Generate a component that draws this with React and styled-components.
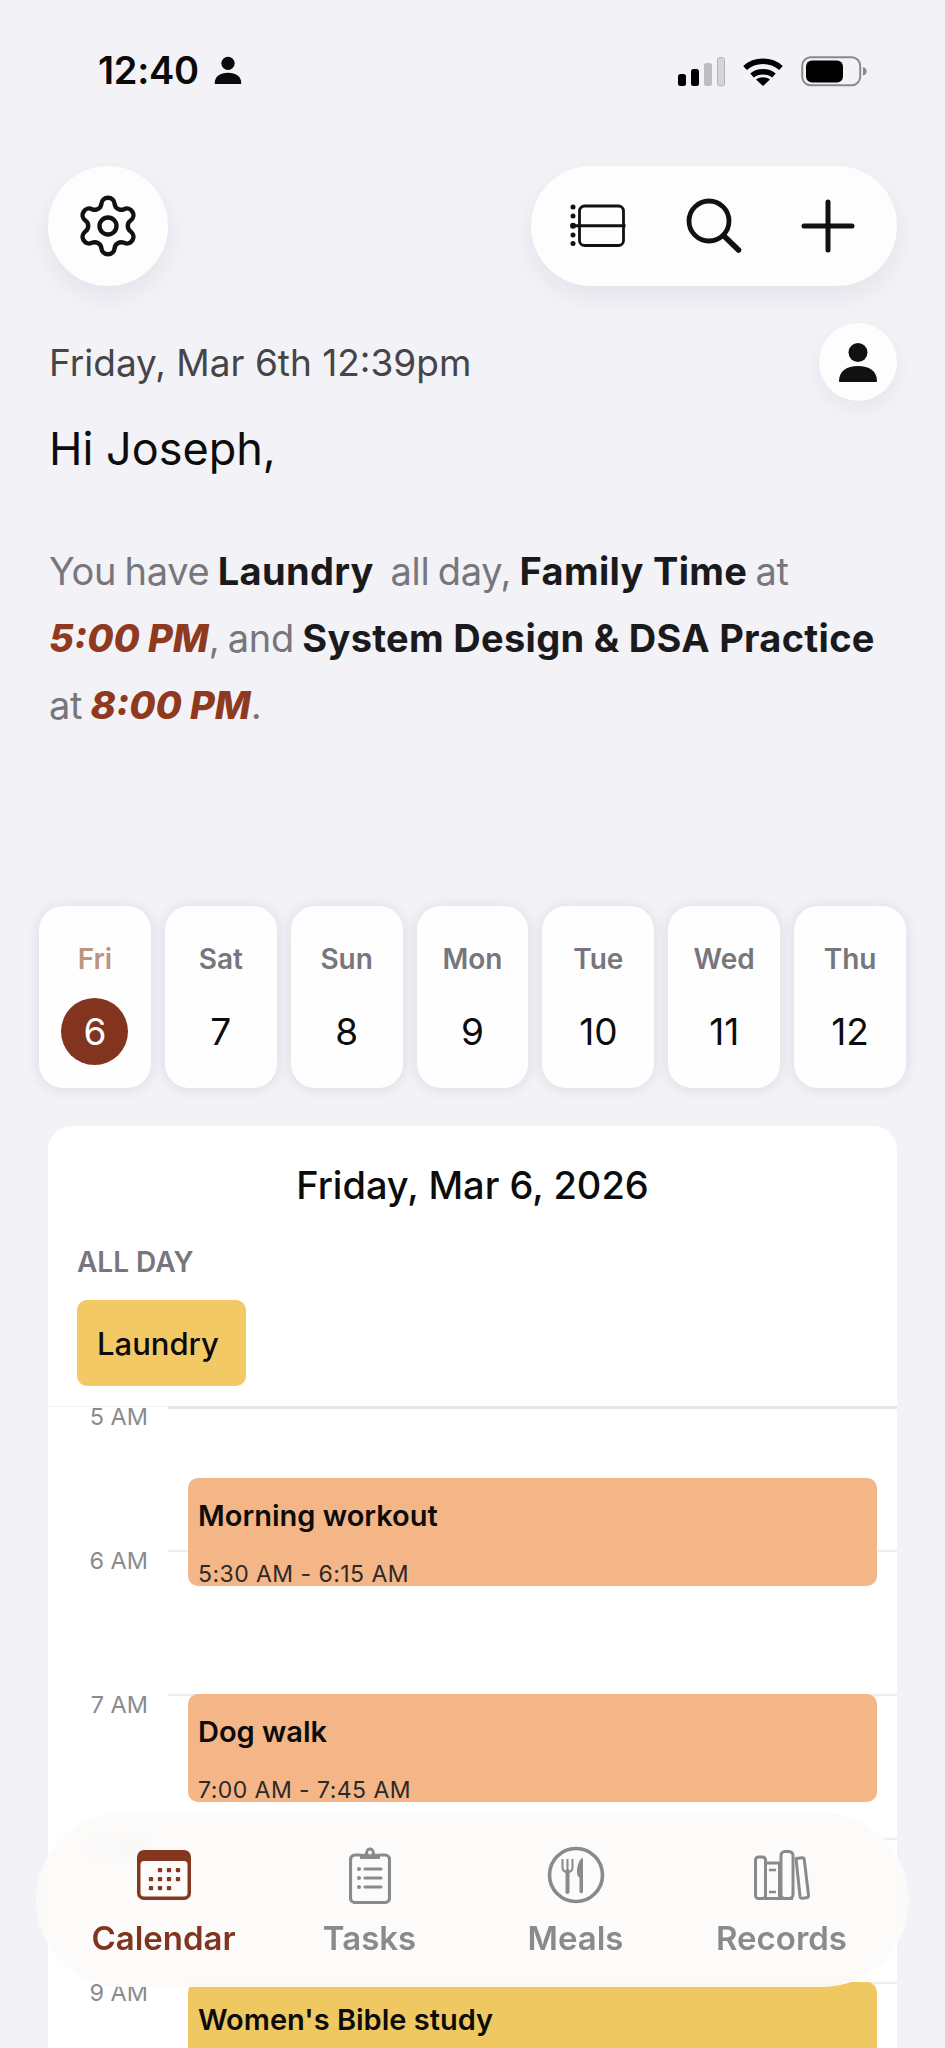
import React from 'react'
import styled, { createGlobalStyle } from 'styled-components'
import { Settings } from 'lucide-react'

const days = [
  { name: 'Fri', num: 6, active: true },
  { name: 'Sat', num: 7 },
  { name: 'Sun', num: 8 },
  { name: 'Mon', num: 9 },
  { name: 'Tue', num: 10 },
  { name: 'Wed', num: 11 },
  { name: 'Thu', num: 12 },
]

const hours = ['5 AM', '6 AM', '7 AM', '8 AM', '9 AM']

const events = [
  { title: 'Morning workout', time: '5:30 AM - 6:15 AM', top: 72, height: 108, color: '#f4b587' },
  { title: 'Dog walk', time: '7:00 AM - 7:45 AM', top: 288, height: 108, color: '#f4b587' },
  { title: "Women's Bible study", time: '', top: 576, height: 108, color: '#f0c862' },
]

const PersonIcon = ({ size }) => (
  <svg width={size} height={size} viewBox="0 0 40 40" fill="currentColor">
    <circle cx="20" cy="10.5" r="9.5" />
    <path d="M1 39c0-10 8-15 19-15s19 5 19 15c0 .6-.4 1-1 1H2c-.6 0-1-.4-1-1z" />
  </svg>
)

const SignalIcon = () => (
  <svg width="47" height="30" viewBox="0 0 47 30">
    <rect x="0" y="17" width="8" height="12" rx="2.5" fill="#000" />
    <rect x="13" y="12" width="8" height="17" rx="2.5" fill="#000" />
    <rect x="26" y="6" width="8" height="23" rx="2.5" fill="#bdbdc0" />
    <rect x="39.5" y="0.5" width="7" height="28.5" rx="2.5" fill="#d5d5d8" stroke="#b5b5b8" strokeWidth="1" />
  </svg>
)

const WifiIcon = () => (
  <svg width="42" height="31" viewBox="0 0 42 31" fill="none" stroke="#000" strokeWidth="5.4">
    <path d="M3 12C13 3 29 3 39 12" />
    <path d="M10 19.5C16 14.5 26 14.5 32 19.5" />
    <path d="M21 30l-7-6.6c4-3 10-3 14 0z" fill="#000" stroke="none" />
  </svg>
)

const BatteryIcon = () => (
  <svg width="66" height="31" viewBox="0 0 66 31">
    <rect x="1.2" y="1.2" width="58" height="28" rx="8.5" fill="none" stroke="#8a8a8c" strokeWidth="2" />
    <rect x="5" y="4.5" width="37" height="22" rx="6" fill="#000" />
    <path d="M62 11c2.4.6 3.6 2.2 3.6 4.3S64.4 19 62 19.6z" fill="#8a8a8c" />
  </svg>
)

const AgendaIcon = () => (
  <svg width="56" height="44" viewBox="0 0 56 44" fill="none" stroke="#111" strokeWidth="2.8">
    <path d="M9.5 21V7a5 5 0 0 1 5-5h34a5 5 0 0 1 5 5v14M9.5 23v13.5a5 5 0 0 0 5 5h34a5 5 0 0 0 5-5V23" />
    <path d="M2 21.8H55.5" strokeWidth="3" />
    <g fill="#111" stroke="none">
      <circle cx="3" cy="3" r="2.5" />
      <circle cx="3" cy="12" r="2.5" />
      <circle cx="3" cy="21.8" r="3" />
      <circle cx="3" cy="31" r="2.5" />
      <circle cx="3" cy="39.5" r="2.5" />
    </g>
  </svg>
)

const SearchIcon = () => (
  <svg width="56" height="56" viewBox="0 0 56 56" fill="none" stroke="#111" strokeWidth="4.8" strokeLinecap="round">
    <circle cx="23" cy="23" r="20" />
    <path d="M38 38L52.5 52" strokeWidth="5.5" />
  </svg>
)

const PlusIcon = () => (
  <svg width="54" height="54" viewBox="0 0 54 54" fill="none" stroke="#111" strokeWidth="5" strokeLinecap="round">
    <path d="M27 3V51M3 27H51" />
  </svg>
)

const CalendarIcon = () => (
  <svg width="54" height="50" viewBox="0 0 54 50">
    <rect width="54" height="50" rx="7" fill="#85361f" />
    <rect x="3.5" y="11" width="47" height="35.5" rx="3.5" fill="#fdfcfb" />
    <g fill="#85361f">
      {[[23, 20], [32, 20], [41, 20], [14, 29], [23, 29], [32, 29], [41, 29], [14, 38], [23, 38], [32, 38]].map(([x, y]) => (
        <rect key={`${x}-${y}`} x={x - 2.2} y={y - 2} width="4.4" height="4.2" rx="1" />
      ))}
    </g>
  </svg>
)

const TasksIcon = () => (
  <svg width="42" height="58" viewBox="0 0 42 58" fill="none" stroke="#8a8a8a" strokeWidth="3.2" strokeLinecap="round">
    <path d="M11 9H6a4.5 4.5 0 0 0-4.5 4.5V52A4.5 4.5 0 0 0 6 56.5H36a4.5 4.5 0 0 0 4.5-4.5V13.5A4.5 4.5 0 0 0 36 9H31" />
    <path d="M11 12V9.5c0-1 .8-1.7 1.7-1.7H16C16.5 3.5 18.5 1.5 21 1.5S25.5 3.5 26 7.8h3.3c.9 0 1.7.7 1.7 1.7V12c0 .5-.5 1-1 1H12c-.5 0-1-.5-1-1z" fill="#8a8a8a" stroke="none" />
    <circle cx="21" cy="6.5" r="2" fill="#fbfaf9" stroke="none" />
    <path d="M16 23H32M16 32H32M16 41H32" />
    <g fill="#8a8a8a" stroke="none">
      <circle cx="10" cy="23" r="2" />
      <circle cx="10" cy="32" r="2" />
      <circle cx="10" cy="41" r="2" />
    </g>
  </svg>
)

const MealsIcon = () => (
  <svg width="58" height="58" viewBox="0 0 58 58" fill="none" stroke="#8a8a8a">
    <circle cx="29" cy="29" r="26.5" strokeWidth="3.6" />
    <path d="M20.5 13V24M15.5 13V21c0 3.5 2 5 5 5s5-1.5 5-5V13" strokeWidth="2" />
    <path d="M20.5 25V46" strokeWidth="4" strokeLinecap="round" />
    <path d="M35 12c-3 2-5 8-5 14 0 3 1 5 2.5 5.5V46c0 1.5 3.5 1.5 3.5 0V13c0-1-.5-1.3-1-1z" fill="#8a8a8a" stroke="none" />
  </svg>
)

const RecordsIcon = () => (
  <svg width="56" height="50" viewBox="0 0 56 50" fill="none" stroke="#8a8a8a" strokeWidth="3" strokeLinejoin="round">
    <rect x="1.5" y="7" width="10" height="41.5" rx="3" />
    <rect x="11.5" y="13" width="14" height="35.5" />
    <rect x="27" y="1.5" width="12" height="47" rx="4" />
    <path d="M11.5 48.5H39" />
    <path d="M42 8.5l6.5-.8c1 0 1.5.5 1.7 1.3L54.5 45c.2 1.5-.5 2.5-2 2.7l-4 .5c-1.5.2-2.3-.5-2.5-2z" />
    <path d="M15 20H22M15 42H22" strokeWidth="2.6" />
  </svg>
)

const navItems = [
  { label: 'Calendar', icon: <CalendarIcon />, active: true },
  { label: 'Tasks', icon: <TasksIcon /> },
  { label: 'Meals', icon: <MealsIcon /> },
  { label: 'Records', icon: <RecordsIcon /> },
]

const App = () => {
  return (
    <Page>
      <GlobalStyle />
      <StatusBar>
        <Clock>
          12:40
          <PersonIcon size={28} />
        </Clock>
        <StatusIcons>
          <SignalIcon />
          <WifiIcon />
          <BatteryIcon />
        </StatusIcons>
      </StatusBar>

      <TopBar>
        <RoundButton>
          <Settings size={68} strokeWidth={1.55} color="#111" />
        </RoundButton>
        <ActionPill>
          <AgendaIcon />
          <SearchIcon />
          <PlusIcon />
        </ActionPill>
      </TopBar>

      <DateRow>
        <DateText>Friday, Mar 6th 12:39pm</DateText>
        <ProfileButton>
          <PersonIcon size={40} />
        </ProfileButton>
      </DateRow>

      <Greeting>Hi Joseph,</Greeting>
      <Summary>
        You have <b>Laundry</b>&nbsp; all day, <b>Family Time</b> at
        <br />
        <em>5:00 PM</em>, and <b>System Design &amp; DSA Practice</b>
        <br />
        at <em>8:00 PM</em>.
      </Summary>

      <WeekStrip>
        {days.map((d) => (
          <DayCard key={d.name}>
            <DayName $active={d.active}>{d.name}</DayName>
            <DayNum $active={d.active}>{d.num}</DayNum>
          </DayCard>
        ))}
      </WeekStrip>

      <CalendarCard>
        <CardTitle>Friday, Mar 6, 2026</CardTitle>
        <AllDayLabel>ALL DAY</AllDayLabel>
        <AllDayChip>Laundry</AllDayChip>
        <Timeline>
          {hours.map((h) => (
            <HourRow key={h}>
              <HourLabel>{h}</HourLabel>
              <HourLine />
            </HourRow>
          ))}
          {events.map((ev) => (
            <EventBlock key={ev.title} $top={ev.top} $height={ev.height} $color={ev.color}>
              <EventTitle>{ev.title}</EventTitle>
              <EventTime>{ev.time}</EventTime>
            </EventBlock>
          ))}
        </Timeline>
      </CalendarCard>

      <BottomNav>
        {navItems.map((item) => (
          <NavItem key={item.label}>
            <NavIcon>{item.icon}</NavIcon>
            <NavLabel $active={item.active}>{item.label}</NavLabel>
          </NavItem>
        ))}
      </BottomNav>
    </Page>
  )
}

export default App

const GlobalStyle = createGlobalStyle`
html, body {
  margin: 0;
  padding: 0;
  background: #f2f2f7;
}
* {
  box-sizing: border-box;
}
`
const Page = styled.div`
position: relative;
width: 945px;
height: 2048px;
overflow: hidden;
background: #f2f2f7;
font-family: Inter, "Liberation Sans", sans-serif;
color: #111;
`
const StatusBar = styled.div`
height: 140px;
padding: 0 78px 0 98px;
display: flex;
justify-content: space-between;
align-items: center;
`
const Clock = styled.div`
display: flex;
align-items: center;
gap: 15px;
font-size: 38px;
font-weight: 600;
letter-spacing: -0.3px;
color: #0a0a0a;
`
const StatusIcons = styled.div`
display: flex;
align-items: center;
gap: 17px;
margin-top: 3px;
`
const TopBar = styled.div`
margin-top: 26px;
padding: 0 48px;
display: flex;
justify-content: space-between;
`
const RoundButton = styled.div`
width: 120px;
height: 120px;
border-radius: 50%;
background: #fdfdfe;
box-shadow: 0 10px 26px rgba(30, 30, 50, 0.07);
display: flex;
align-items: center;
justify-content: center;
`
const ActionPill = styled.div`
width: 366px;
height: 120px;
padding: 0 42px 0 39px;
border-radius: 60px;
background: #fdfdfe;
box-shadow: 0 10px 26px rgba(30, 30, 50, 0.07);
display: flex;
align-items: center;
justify-content: space-between;
`
const DateRow = styled.div`
margin-top: 37px;
padding: 0 48px 0 49px;
height: 78px;
display: flex;
align-items: center;
justify-content: space-between;
`
const DateText = styled.div`
font-size: 37px;
color: #454549;
`
const ProfileButton = styled.div`
width: 78px;
height: 78px;
border-radius: 50%;
background: #fdfdfe;
box-shadow: 0 8px 20px rgba(30, 30, 50, 0.06);
display: flex;
align-items: center;
justify-content: center;
color: #111;
`
const Greeting = styled.div`
margin-top: 20px;
padding-left: 49px;
height: 56px;
line-height: 56px;
font-size: 45px;
font-weight: 400;
color: #0c0c0c;
`
const Summary = styled.div`
margin-top: 61px;
padding-left: 49px;
font-size: 38px;
line-height: 67px;
word-spacing: -2px;
letter-spacing: -0.3px;
color: #77767c;
white-space: nowrap;
b {
  font-weight: 700;
  letter-spacing: 0.3px;
  word-spacing: 0;
  color: #1a1a1c;
}
em {
  font-weight: 800;
  font-style: italic;
  letter-spacing: 0;
  word-spacing: 0;
  color: #8f3a1e;
}
`
const WeekStrip = styled.div`
margin-top: 167px;
padding: 0 39px;
display: grid;
grid-template-columns: repeat(7, 1fr);
gap: 14px;
`
const DayCard = styled.div`
height: 182px;
border-radius: 24px;
background: #fefefe;
box-shadow: 0 1px 14px rgba(30, 30, 50, 0.11);
display: flex;
flex-direction: column;
align-items: center;
padding-top: 36px;
`
const DayName = styled.div`
font-size: 28px;
line-height: 34px;
font-weight: 600;
color: ${(p) => (p.$active ? '#bd9481' : '#77767c')};
`
const DayNum = styled.div`
margin-top: 22px;
width: 67px;
height: 67px;
border-radius: 50%;
display: flex;
align-items: center;
justify-content: center;
font-size: 37px;
font-weight: 400;
color: ${(p) => (p.$active ? '#fff' : '#0c0c0c')};
background: ${(p) => (p.$active ? '#82341f' : 'transparent')};
`
const CalendarCard = styled.div`
margin: 38px 48px 0;
padding-top: 35px;
border-radius: 24px 24px 0 0;
background: #fff;
`
const CardTitle = styled.div`
text-align: center;
font-size: 38px;
line-height: 48px;
font-weight: 500;
color: #0c0c0c;
`
const AllDayLabel = styled.div`
margin: 36px 0 0 29px;
font-size: 28px;
line-height: 34px;
font-weight: 600;
color: #77767c;
`
const AllDayChip = styled.div`
margin: 21px 0 20px 29px;
width: 169px;
height: 86px;
border-radius: 10px;
background: #f2c964;
display: flex;
align-items: center;
padding-left: 20px;
font-size: 31px;
font-weight: 500;
color: #0c0c0c;
`
const Timeline = styled.div`
position: relative;
`
const HourRow = styled.div`
height: 144px;
display: grid;
grid-template-columns: 120px 1fr;
&:first-child > div:last-child {
  border-top: 3px solid #e6e6e8;
}
&:first-child {
  box-shadow: inset 0 1px 0 #f0f0f2;
}
`
const HourLabel = styled.div`
padding-right: 20px;
text-align: right;
font-size: 23.5px;
line-height: 22px;
color: #8a8a8e;
`
const HourLine = styled.div`
border-top: 2px solid #eeeeef;
`
const EventBlock = styled.div`
position: absolute;
left: 140px;
right: 20px;
top: ${(p) => p.$top}px;
height: ${(p) => p.$height}px;
border-radius: 10px;
background: ${(p) => p.$color};
padding: 19px 10px 0;
overflow: hidden;
`
const EventTitle = styled.div`
font-size: 29px;
line-height: 38px;
font-weight: 600;
color: #0c0c0c;
`
const EventTime = styled.div`
margin-top: 24px;
font-size: 23px;
line-height: 30px;
letter-spacing: 0.45px;
color: #2a2a2a;
`
const BottomNav = styled.div`
position: absolute;
left: 36px;
right: 36px;
top: 1813px;
height: 174px;
border-radius: 87px;
background: rgba(252, 251, 250, 0.9);
backdrop-filter: blur(8px);
display: grid;
grid-template-columns: repeat(4, 206px);
justify-content: center;
`
const NavItem = styled.div`
display: flex;
flex-direction: column;
align-items: center;
`
const NavIcon = styled.div`
margin-top: 33px;
height: 58px;
display: flex;
align-items: center;
`
const NavLabel = styled.div`
margin-top: 14px;
font-size: 33px;
line-height: 40px;
font-weight: 600;
color: ${(p) => (p.$active ? '#7f3520' : '#8a8a8a')};
`
